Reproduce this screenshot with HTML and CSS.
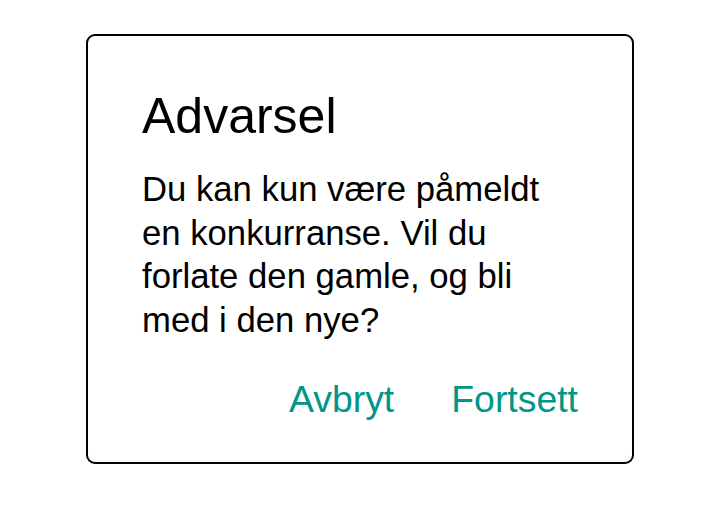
FILE: index.html
```html
<!DOCTYPE html>
<html lang="no">
<head>
<meta charset="utf-8">
<title>Advarsel</title>
<link rel="stylesheet" href="styles.css">
</head>
<body>
<div class="dialog">
  <h1 class="title">Advarsel</h1>
  <p class="message">Du kan kun være påmeldt en konkurranse. Vil du forlate den gamle, og bli med i den nye?</p>
  <div class="actions">
    <button class="action">Avbryt</button>
    <button class="action">Fortsett</button>
  </div>
</div>
</body>
</html>
```
FILE: styles.css
```css
html, body {
  margin: 0;
  padding: 0;
  background: #ffffff;
}
body {
  width: 720px;
  height: 507px;
  font-family: "Liberation Sans", Arial, sans-serif;
  color: #000000;
  padding-top: 34px;
  box-sizing: border-box;
}
.dialog {
  margin-left: 86px;
  width: 548px;
  height: 430px;
  box-sizing: border-box;
  border: 2px solid #000000;
  border-radius: 9px;
  padding: 52px 54px 0 54px;
  display: flex;
  flex-direction: column;
}
.title {
  margin: 0;
  font-size: 50px;
  line-height: 56px;
  font-weight: normal;
}
.message {
  margin: 24px 0 0 0;
  font-size: 34.7px;
  line-height: 43.7px;
}
.actions {
  margin-top: 34px;
  display: flex;
  justify-content: flex-end;
  gap: 57px;
}
.action {
  border: none;
  background: none;
  padding: 0;
  margin: 0;
  font-family: inherit;
  font-size: 37.4px;
  line-height: 44px;
  color: #009688;
}
```
